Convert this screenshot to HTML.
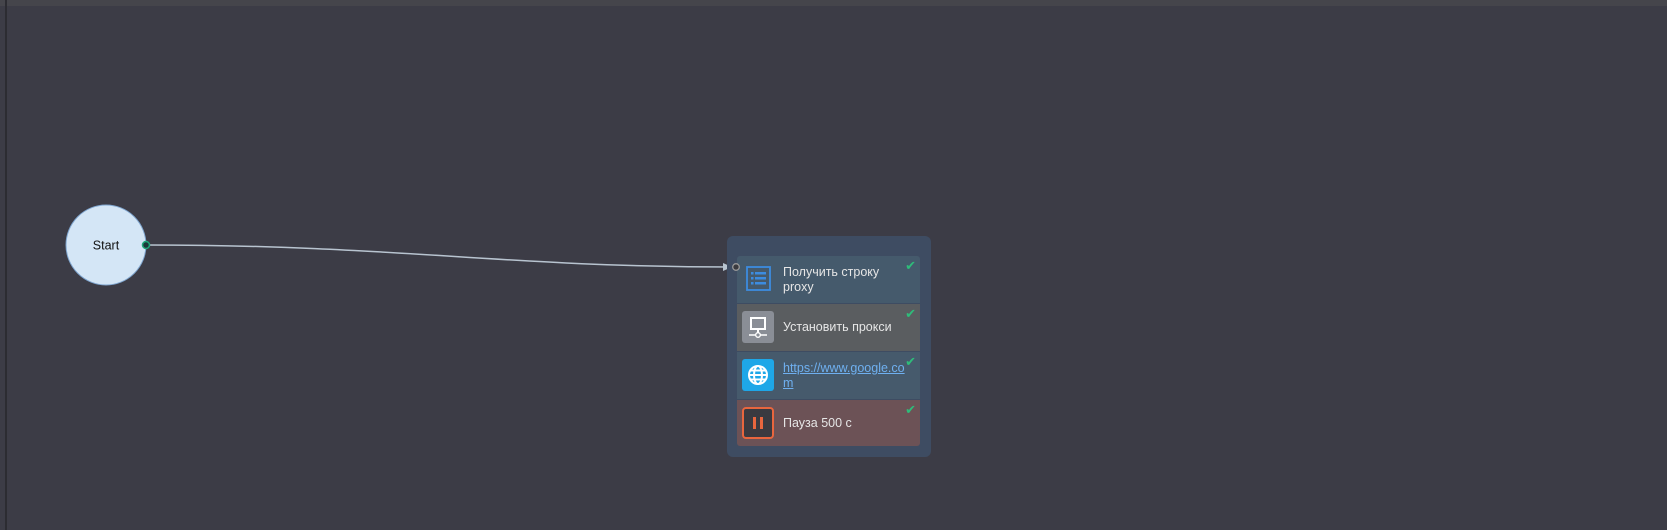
<!DOCTYPE html>
<html><head><meta charset="utf-8"><style>
body{margin:0;width:1667px;height:530px;background:#3c3c46;position:relative;overflow:hidden;font-family:"Liberation Sans","DejaVu Sans",sans-serif}
.a{position:absolute}
.row{position:absolute;left:737px;width:183px;height:47px}
.t{position:absolute;left:46px;color:#e6e6e6;font-size:12.5px;line-height:15px}
.ck{position:absolute;right:4px;top:3px;color:#2ebd7a;font-size:13px;font-weight:bold;font-family:"DejaVu Sans",sans-serif}
.ic{position:absolute;left:5px;top:7px;width:32px;height:32px;border-radius:3px}
</style></head><body>
<div class="a" style="left:0;top:0;width:1667px;height:6px;background:#45454b"></div>
<div class="a" style="left:5px;top:0;width:2px;height:530px;background:#2c2c32"></div>
<svg class="a" style="left:0;top:0" width="1667" height="530">
<path d="M146 245 C400 245 500 267 733 267" stroke="#b8c4d0" stroke-width="1.5" fill="none"/>
<path d="M723 263 L732 267 L723 271 Z" fill="#b8c4d0"/>
<circle cx="106" cy="245" r="40" fill="#d4e6f6" stroke="#7fa6d0" stroke-width="1"/>
<text x="106" y="249.5" text-anchor="middle" font-size="12.5" font-family="Liberation Sans,DejaVu Sans,sans-serif" fill="#111">Start</text>
<circle cx="146" cy="245" r="3.5" fill="#1c3a3a" stroke="#1fa87a" stroke-width="1.5"/>
</svg>
<div class="a" style="left:727px;top:236px;width:204px;height:221px;background:#3e4c62;border-radius:6px"></div>
<div class="row" style="top:256px;background:#455a6c;border-radius:3px 3px 0 0">
<svg class="a" style="left:9px;top:10px" width="25" height="25"><rect x="1" y="1" width="23" height="23" fill="none" stroke="#3c8ce0" stroke-width="1.8"/><g fill="#3c8ce0"><rect x="5" y="6" width="2.5" height="2.5"/><rect x="9" y="6" width="11" height="2.5"/><rect x="5" y="11" width="2.5" height="2.5"/><rect x="9" y="11" width="11" height="2.5"/><rect x="5" y="16" width="2.5" height="2.5"/><rect x="9" y="16" width="11" height="2.5"/></g></svg>
<div class="t" style="top:9px">Получить строку<br>proxy</div><div class="ck">✔</div></div>
<svg class="a" style="left:731px;top:263px" width="10" height="10"><circle cx="5" cy="4" r="3.3" fill="#3a3a3f" stroke="#999" stroke-width="1.3"/></svg>
<div class="row" style="top:304px;background:#5a5d60">
<div class="ic" style="background:#8a8e96"><svg width="32" height="32"><rect x="9" y="7" width="14" height="11" fill="none" stroke="#fff" stroke-width="2"/><line x1="16" y1="18" x2="16" y2="23" stroke="#fff" stroke-width="2"/><line x1="7" y1="24" x2="25" y2="24" stroke="#fff" stroke-width="1.6"/><circle cx="16" cy="24" r="2.3" fill="#8a8e96" stroke="#fff" stroke-width="1.4"/></svg></div>
<div class="t" style="top:16px">Установить прокси</div><div class="ck">✔</div></div>
<div class="row" style="top:352px;background:#465a6c">
<div class="ic" style="background:#1ea7e8"><svg width="32" height="32" fill="none" stroke="#fff" stroke-width="2"><circle cx="16" cy="16" r="9"/><ellipse cx="16" cy="16" rx="4" ry="9"/><line x1="7" y1="16" x2="25" y2="16"/><line x1="8.5" y1="11.5" x2="23.5" y2="11.5"/><line x1="8.5" y1="20.5" x2="23.5" y2="20.5"/></svg></div>
<div class="t" style="top:9px;color:#6fb0f0;text-decoration:underline">https://www.google.co<br>m</div><div class="ck">✔</div></div>
<div class="row" style="top:400px;background:#6c5256;border-radius:0 0 3px 3px;height:46px">
<div class="ic" style="background:#3a3a40;border:2px solid #e8663e;width:28px;height:28px;border-radius:4px"><div class="a" style="left:9px;top:8px;width:3px;height:12px;background:#e8663e"></div><div class="a" style="left:16px;top:8px;width:3px;height:12px;background:#e8663e"></div></div>
<div class="t" style="top:16px">Пауза 500 с</div><div class="ck">✔</div></div>
</body></html>
